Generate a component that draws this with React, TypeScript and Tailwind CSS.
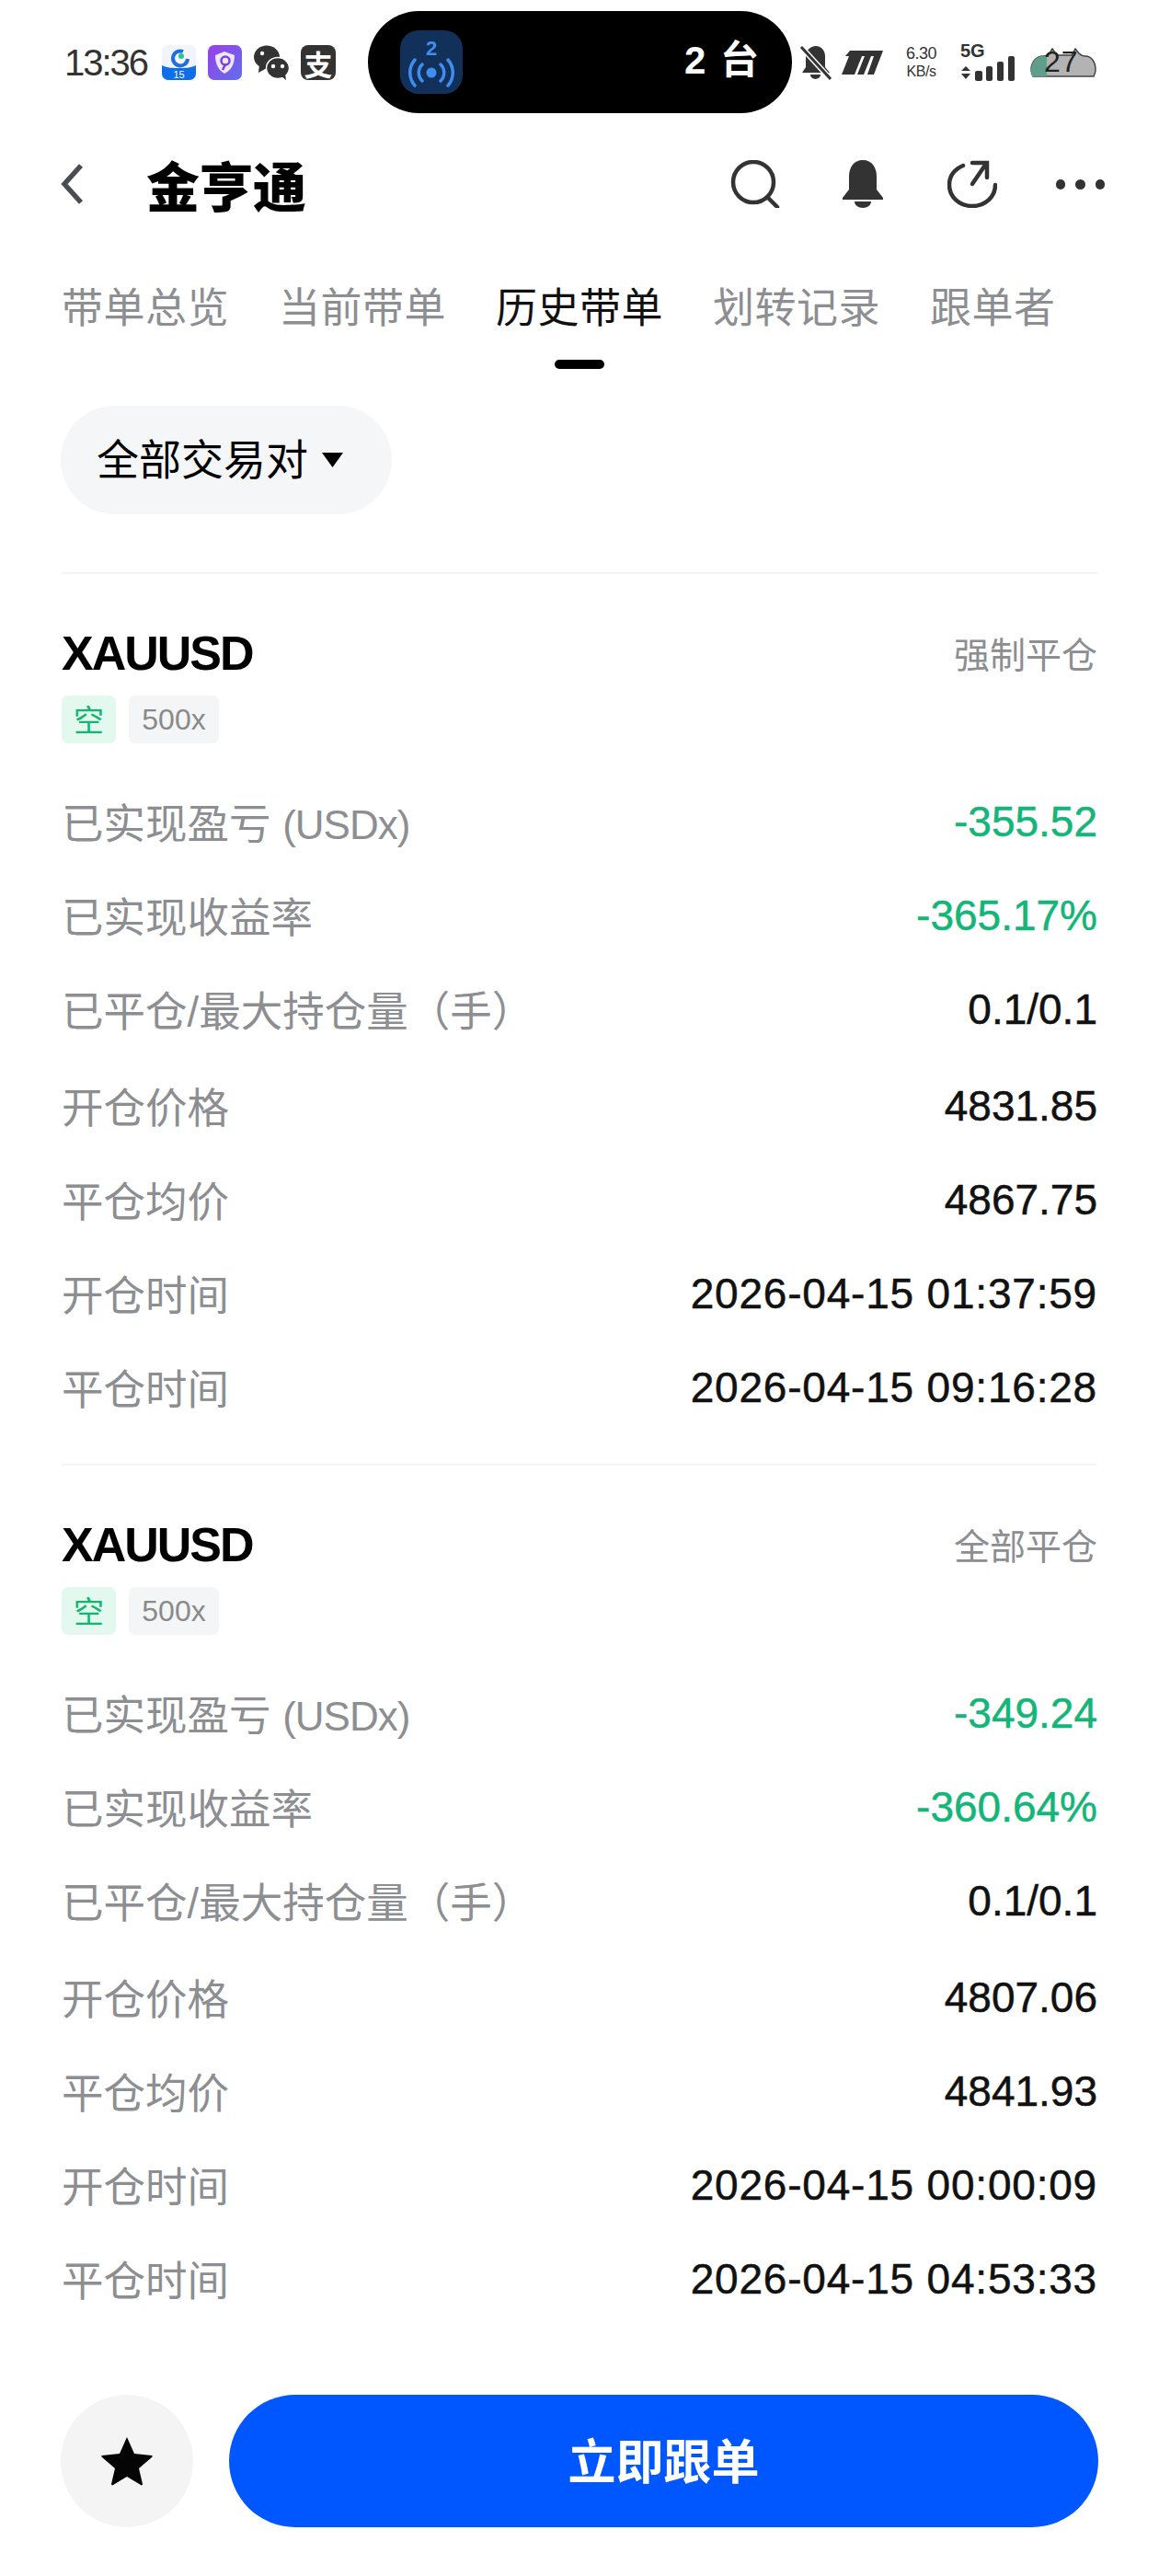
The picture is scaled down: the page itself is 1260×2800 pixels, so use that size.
const CJK = "font-['Liberation_Sans','Noto_Sans_CJK_SC',sans-serif]";

type Row = { label: string; unit?: string; value: string; green?: boolean };

const first: Row[] = [
  { label: "已实现盈亏 ", unit: "(USDx)", value: "-355.52", green: true },
  { label: "已实现收益率", value: "-365.17%", green: true },
  { label: "已平仓/最大持仓量（手）", value: "0.1/0.1" },
  { label: "开仓价格", value: "4831.85" },
  { label: "平仓均价", value: "4867.75" },
  { label: "开仓时间", value: "2026-04-15 01:37:59" },
  { label: "平仓时间", value: "2026-04-15 09:16:28" },
];

const second: Row[] = [
  { label: "已实现盈亏 ", unit: "(USDx)", value: "-349.24", green: true },
  { label: "已实现收益率", value: "-360.64%", green: true },
  { label: "已平仓/最大持仓量（手）", value: "0.1/0.1" },
  { label: "开仓价格", value: "4807.06" },
  { label: "平仓均价", value: "4841.93" },
  { label: "开仓时间", value: "2026-04-15 00:00:09" },
  { label: "平仓时间", value: "2026-04-15 04:53:33" },
];

function StatusBar() {
  return (
    <div className="flex h-[124px] items-start pl-[70px] pt-[12px]">
      <div className="flex h-[112px] w-[330px] items-center">
        <span className="w-[106px] text-[40px] tracking-[-2px] text-[#333] font-['Liberation_Sans',sans-serif]">13:36</span>
        <div className="flex items-center gap-[13px]">
          <svg width="37" height="38" viewBox="0 0 37 38">
            <rect width="37" height="38" rx="7" fill="#f1f5fb" />
            <path d="M0 22c6 3 12 3 18.500 3S31 25 37 22v9a7 7 0 0 1-7 7H7a7 7 0 0 1-7-7z" fill="#0f6fe8" />
            <path d="M23 7a8 8 0 1 0 5 8" fill="none" stroke="#1d6fe0" strokeWidth="4" />
            <circle cx="21" cy="12" r="3" fill="#2bc48d" />
            <text x="18.500" y="36" fontSize="11" textAnchor="middle" fill="#fff" fontFamily="Liberation Sans">15</text>
          </svg>
          <svg width="37" height="38" viewBox="0 0 37 38">
            <defs>
              <linearGradient id="shieldBg" x1="0" y1="0" x2="1" y2="1">
                <stop offset="0" stopColor="#9a3fe6" />
                <stop offset="1" stopColor="#5f6ff0" />
              </linearGradient>
            </defs>
            <rect width="37" height="38" rx="7" fill="url(#shieldBg)" />
            <path d="M8 11l10-4 11 4c0 9-3 16-11 20C11 27 8 20 8 11z" fill="#ece6ff" />
            <circle cx="19" cy="17" r="4.500" fill="none" stroke="#7a3fe0" strokeWidth="2.500" />
            <path d="M19 21l-3 6" stroke="#7a3fe0" strokeWidth="2.500" />
          </svg>
          <svg width="38" height="38" viewBox="0 0 38 38" fill="#333">
            <ellipse cx="14" cy="13" rx="14" ry="12.500" />
            <path d="M6 21l-1 9 9-5z" />
            <ellipse cx="26" cy="25" rx="12.500" ry="11.500" stroke="#fff" strokeWidth="1.500" />
            <path d="M30 34l5 4-1-7z" />
            <circle cx="9" cy="9" r="2.200" fill="#fff" />
            <circle cx="21" cy="23" r="2.200" fill="#fff" />
            <circle cx="31" cy="23" r="2.200" fill="#fff" />
          </svg>
          <span className="flex h-[38px] w-[38px] items-center justify-center rounded-[8px] bg-[#333] text-[31px] font-bold leading-none text-white font-['Noto_Sans_CJK_SC',sans-serif]">支</span>
        </div>
      </div>
      <div className="relative flex h-[111px] w-[461px] items-center rounded-[56px] bg-black">
        <div className="ml-[35px] flex h-[69px] w-[68px] flex-col items-center justify-center rounded-[20px] bg-[#12315a]">
          <span className="mt-[2px] text-[22px] font-bold leading-[20px] text-[#3f8df0] font-['Liberation_Sans',sans-serif]">2</span>
          <svg width="52" height="32" viewBox="0 0 52 32" fill="none" stroke="#3f8df0" strokeWidth="3.500" strokeLinecap="round">
            <circle cx="26" cy="16" r="5.500" fill="#3f8df0" stroke="none" />
            <path d="M16 7c-5 5-5 13 0 18M36 7c5 5 5 13 0 18M8 2c-7 8-7 20 0 28M44 2c7 8 7 20 0 28" />
          </svg>
        </div>
        <span className="absolute right-[34px] top-[28px] text-[42px] font-bold leading-[52px] tracking-[2px] text-white font-['Liberation_Sans','Noto_Sans_CJK_SC',sans-serif]">2 台</span>
      </div>
      <div className="ml-[8px] flex h-[112px] items-center">
        <svg width="35" height="40" viewBox="0 0 35 40" fill="#333">
          <path d="M18 2c6 0 10 5 10 11v12l5 6H3l4-6V13C7 7 12 2 18 2z" />
          <path d="M12 33h11a5.500 5 0 0 1-11 0z" />
          <path d="M2 3l32 35" stroke="#fff" strokeWidth="6" />
          <path d="M2 3l32 35" stroke="#333" strokeWidth="3" />
        </svg>
        <svg className="ml-[11px]" width="45" height="26" viewBox="0 0 45 26" fill="#333">
          <path d="M9 0h36l-10 26h-7l7-20h-3l-8 20h-7l8-20h-3L14 26H0l8-20H4z" />
        </svg>
        <div className="ml-[23px] flex w-[37px] flex-col items-center text-[#333] font-['Liberation_Sans',sans-serif]">
          <span className="text-[18px] leading-[20px] tracking-[-0.500px]">6.30</span>
          <span className="text-[16px] leading-[20px] tracking-[-0.500px]">KB/s</span>
        </div>
        <div className="relative ml-[24px] h-[40px] w-[60px]">
          <span className="absolute left-0 top-[-3px] text-[20px] font-bold leading-[20px] text-[#333] font-['Liberation_Sans',sans-serif]">5G</span>
          <svg className="absolute bottom-0 left-0" width="60" height="27" viewBox="0 0 60 27" fill="#333">
            <path d="M6 11l5 5H1zM6 25l5-6H1z" />
            <rect x="16" y="16" width="8" height="11" rx="2" />
            <rect x="28" y="11" width="7" height="16" rx="2" />
            <rect x="40" y="6" width="7" height="21" rx="2" />
            <rect x="52" y="0" width="7" height="27" rx="2" />
          </svg>
        </div>
        <div className="relative ml-[16px] h-[32px] w-[72px]">
          <svg width="72" height="32" viewBox="0 0 72 32">
            <path d="M1 24c0-8 5-15 13-15 3 0 5-1 7-3l3-5 5 7h16l4-7 4 5c2 2 4 3 7 3 7 0 11 7 11 15 0 3-1 5-2 7H3c-1-2-2-4-2-7z" fill="#b3b3b3" stroke="#444" strokeWidth="1.500" />
            <path d="M2 31c-1-2-1-4-1-7 0-8 5-15 13-15h3a3 3 0 0 1 1 0v22z" fill="#5f9e8a" />
          </svg>
          <span className="absolute left-[15px] top-[-2px] text-[32px] leading-[34px] tracking-[1px] text-[#222] font-['Liberation_Sans',sans-serif]">27</span>
        </div>
      </div>
    </div>
  );
}

function Header() {
  return (
    <div className="mt-[48px] flex h-[56px] items-center pl-[65px] pr-[59px]">
      <svg width="26" height="44" viewBox="0 0 26 44" fill="none" stroke="#4a4d52" strokeWidth="5.500">
        <path d="M23 2L5 22l18 20" />
      </svg>
      <h1 className="ml-[68px] text-[58px] font-black leading-none text-black font-['Noto_Sans_CJK_SC',sans-serif]">金亨通</h1>
      <div className="ml-auto flex items-center">
        <svg width="54" height="52" viewBox="0 0 54 52" fill="none" stroke="#333" strokeWidth="4.500" strokeLinecap="round">
          <circle cx="25" cy="24" r="22" />
          <path d="M41 41l10 10" />
        </svg>
        <svg className="ml-[67px]" width="46" height="52" viewBox="0 0 46 52" fill="#333">
          <path d="M23 0c10 0 15 8 15 18v14l7 9v2H1v-2l7-9V18C8 8 13 0 23 0z" />
          <path d="M14 45h18c0 4-4 7-9 7s-9-3-9-7z" />
        </svg>
        <svg className="ml-[69px]" width="54" height="52" viewBox="0 0 54 52" fill="none" stroke="#333" strokeWidth="4.500" strokeLinecap="round">
          <path d="M17 6C8 10 2 17 2 27c0 13 11 23 25 23s25-10 25-23" />
          <path d="M27 26L42 4M27 3h16v16" />
        </svg>
        <div className="ml-[64px] flex gap-[11px]">
          <span className="h-[11px] w-[10.500px] rounded-full bg-[#333]" />
          <span className="h-[11px] w-[10.500px] rounded-full bg-[#333]" />
          <span className="h-[11px] w-[10.500px] rounded-full bg-[#333]" />
        </div>
      </div>
    </div>
  );
}

function Tabs() {
  const tabs = ["带单总览", "当前带单", "历史带单", "划转记录", "跟单者"];
  return (
    <div className={`mt-[78px] flex gap-[54px] pl-[67px] text-[45px] leading-[60px] tracking-[0.500px] ${CJK}`}>
      {tabs.map((t, i) => (
        <div key={t} className="relative h-[95px]">
          <span className={i === 2 ? "text-[#111]" : "text-[#8c8e91]"}>{t}</span>
          {i === 2 && <span className="absolute bottom-0 left-1/2 h-[10px] w-[54px] -translate-x-1/2 rounded-full bg-black" />}
        </div>
      ))}
    </div>
  );
}

function Card({ title, status, rows }: { title: string; status: string; rows: Row[] }) {
  return (
    <section className="border-t-2 border-[#f5f5f5] pt-[56px]">
      <div className="flex h-[60px] items-center justify-between">
        <span className="text-[52px] font-bold leading-[60px] tracking-[-2px] text-black font-['Liberation_Sans',sans-serif]">{title}</span>
        <span className={`mt-[6px] text-[39px] leading-[60px] text-[#8c8e91] ${CJK}`}>{status}</span>
      </div>
      <div className="mt-[16px] flex gap-[14px]">
        <span className="flex h-[52px] w-[59px] items-center justify-center rounded-[7px] bg-[#e3f8ef] text-[33px] text-[#12b76f] font-['Noto_Sans_CJK_SC',sans-serif]">空</span>
        <span className="flex h-[52px] w-[98px] items-center justify-center rounded-[7px] bg-[#f4f5f6] text-[32px] text-[#8a8a8a] font-['Liberation_Sans',sans-serif]">500x</span>
      </div>
      <div className="mt-[55px] flex flex-col gap-[42px]">
        {rows.map((r, i) => (
          <div key={r.label} className={`flex h-[60px] items-center justify-between ${i === 3 ? "mt-[3px]" : ""}`}>
            <span className={`mt-[7px] whitespace-pre text-[45.500px] leading-[60px] text-[#8c8e91] ${CJK}`}>
              {r.label}
              {r.unit && <span className="text-[44px] tracking-[-1px]">{r.unit}</span>}
            </span>
            <span className={`-mt-[1px] text-[46px] leading-[60px] font-['Liberation_Sans',sans-serif] [-webkit-text-stroke:0.500px] ${r.value.length > 12 ? "tracking-[0.800px]" : ""} ${r.green ? "text-[#14b578]" : "text-[#111]"}`}>{r.value}</span>
          </div>
        ))}
      </div>
    </section>
  );
}

export default function App() {
  return (
    <div className={`flex h-[2800px] w-[1260px] flex-col overflow-hidden bg-white ${CJK}`}>
      <StatusBar />
      <Header />
      <Tabs />
      <div className="mx-[66px] mt-[40px]">
        <div className={`flex h-[118px] w-[360px] items-center rounded-[59px] bg-[#f4f6f7] pl-[39px] text-[46px] text-black ${CJK}`}>
          <span>全部交易对</span>
          <svg className="ml-[15px]" width="23" height="16" viewBox="0 0 23 16" fill="#000">
            <path d="M0 0h23L11.500 16z" />
          </svg>
        </div>
      </div>
      <div className="mx-[67px] mt-[63px] flex flex-col gap-[53px]">
        <Card title="XAUUSD" status="强制平仓" rows={first} />
        <Card title="XAUUSD" status="全部平仓" rows={second} />
      </div>
      <div className="mt-auto flex items-center gap-[39px] px-[66px] pb-[53px]">
        <div className="flex h-[144px] w-[144px] items-center justify-center rounded-full bg-[#f4f4f4]">
          <svg width="58" height="54" viewBox="0 0 56 54" fill="#050505">
            <path d="M28 1l8 18 19 2c1 0 1 1 0 2L41 35l4 17c0 1-1 2-2 1L28 44 13 53c-1 1-2 0-2-1l4-17L1 23c-1-1-1-2 0-2l19-2z" />
          </svg>
        </div>
        <button type="button" className={`flex h-[144px] flex-1 items-center justify-center rounded-[72px] bg-[#0057ff] pt-[3px] text-[52px] font-bold text-white ${CJK}`}>
          立即跟单
        </button>
      </div>
    </div>
  );
}
